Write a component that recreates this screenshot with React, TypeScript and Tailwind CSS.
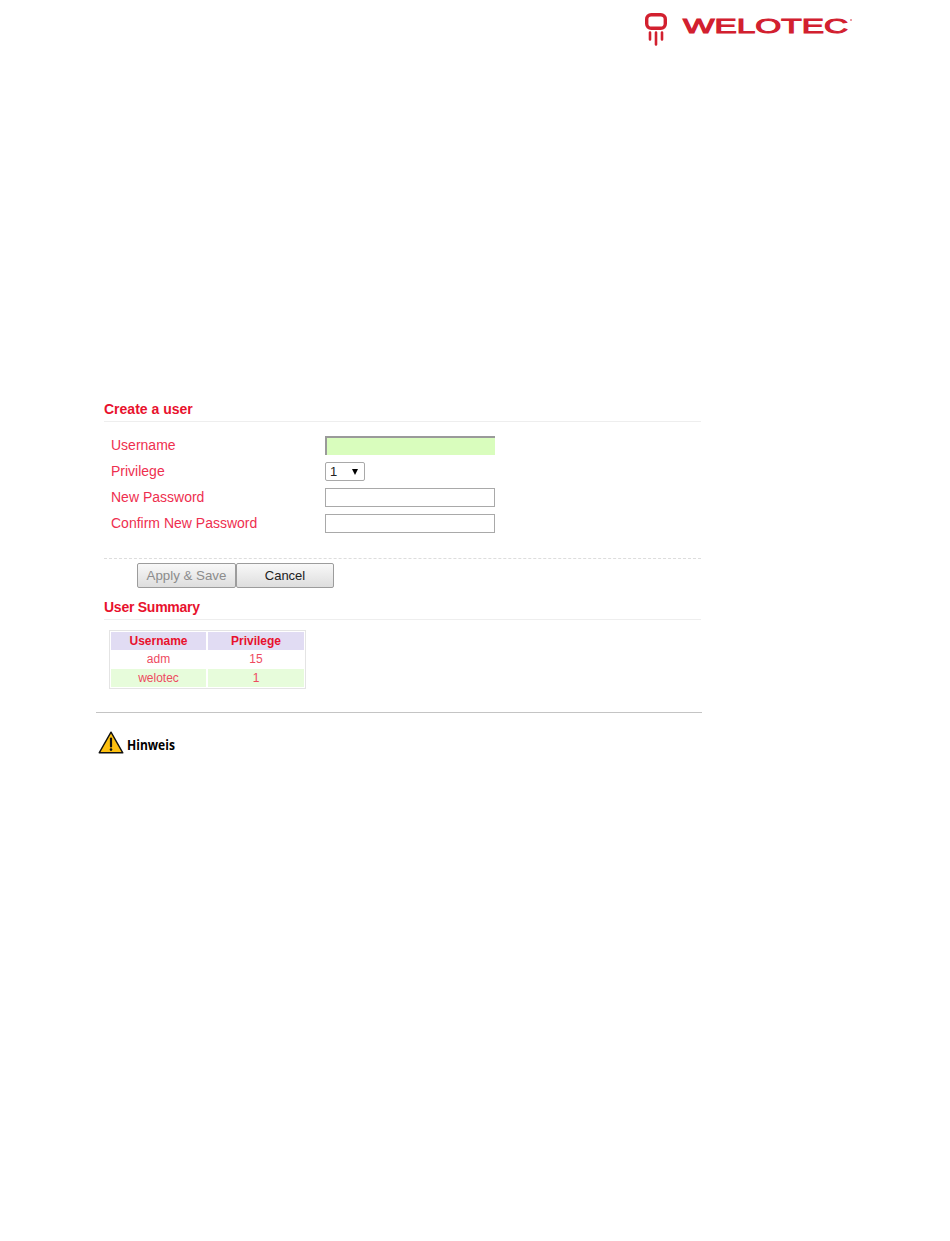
import React from 'react';

const labelClass = 'w-[214px] text-[14px] leading-[19px] text-[#ee2f4f]';
const inputClass = 'block w-[170px] h-[19px] border border-[#a9a9a9] bg-white';

const Logo = () => (
  <svg width="208" height="33" viewBox="0 0 208 33" className="block">
    <rect x="1.7" y="1.7" width="18.6" height="13.6" rx="4.5" fill="none" stroke="#d2202f" strokeWidth="3.4" />
    <path d="M5 19.5v7M11 19.5v12M17 19.5v7" stroke="#d2202f" strokeWidth="2.6" strokeLinecap="round" />
    <text
      x="38"
      y="20"
      textLength="165"
      lengthAdjust="spacingAndGlyphs"
      fill="#d2202f"
      fontFamily="'Liberation Sans', sans-serif"
      fontSize="20"
      stroke="#d2202f"
      strokeWidth="1"
    >
      WELOTEC
    </text>
    <circle cx="206" cy="7" r="0.8" fill="#d2202f" />
  </svg>
);

const WarningIcon = () => (
  <svg width="26" height="23" viewBox="0 0 26 23" className="block">
    <path d="M13 1.2 24.8 21.8H1.2Z" fill="#fdc010" stroke="#111" strokeWidth="1.4" strokeLinejoin="round" />
    <path d="M13 7.5v8" stroke="#111" strokeWidth="2.2" strokeLinecap="round" />
    <circle cx="13" cy="18.6" r="1.3" fill="#111" />
  </svg>
);

const SectionTitle = ({ children, className }: { children: React.ReactNode; className?: string }) => (
  <div className={`border-b border-[#eeeeee] h-[20px] text-[14px] font-bold leading-[15px] text-[#e8112d] ${className ?? ''}`}>{children}</div>
);

export default function App() {
  return (
    <div className="w-[950px] h-[1241px] bg-white font-['Liberation_Sans',Arial,sans-serif]">
      <div className="flex justify-end pt-[13px] pr-[97px]">
        <Logo />
      </div>

      <div className="mt-[356px] ml-[104px] w-[597px]">
        <SectionTitle>Create a user</SectionTitle>

        <div className="pl-[7px] pt-[14px]">
          <div className="flex items-center h-[19px]">
            <div className={labelClass}>Username</div>
            <div className="w-[170px] h-[19px] border-2 border-b-0 border-r-0 border-[#9a9a9a] bg-[#d9fdbd]" />
          </div>
          <div className="flex items-center h-[19px] mt-[7px]">
            <div className={labelClass}>Privilege</div>
            <div className="flex items-center justify-between w-[40px] h-[19px] pl-[4px] pr-[6px] border border-[#a9a9a9] rounded-[2px] bg-white text-[13px] text-[#222222]">
              <span>1</span>
              <span className="w-0 h-0 border-x-[3.5px] border-x-transparent border-t-[6px] border-t-black" />
            </div>
          </div>
          <div className="flex items-center h-[19px] mt-[7px]">
            <div className={labelClass}>New Password</div>
            <div className={inputClass} />
          </div>
          <div className="flex items-center h-[19px] mt-[7px]">
            <div className={labelClass}>Confirm New Password</div>
            <div className={inputClass} />
          </div>
        </div>

        <div className="mt-[25px] border-t border-dashed border-[#dddddd]" />

        <div className="flex pl-[33px] mt-[4px]">
          <button className="w-[99px] h-[25px] border border-[#9c9c9c] rounded-[2px] bg-gradient-to-b from-[#f8f8f8] to-[#dedede] text-[13.3px] text-[#8c8c8c]">Apply &amp; Save</button>
          <button className="w-[98px] h-[25px] border border-[#9c9c9c] rounded-[2px] bg-gradient-to-b from-[#f8f8f8] to-[#dedede] text-[13px] text-[#222222]">Cancel</button>
        </div>

        <div className="mt-[12px]">
          <SectionTitle className="tracking-[-0.25px]">User Summary</SectionTitle>
        </div>

        <div className="ml-[5px] mt-[10px] w-[197px] border border-[#e4e4e4] p-[1px] text-[12px] text-center">
          <div className="flex h-[18px] leading-[18px] bg-[#e1dcf3] font-bold text-[#e8112d]">
            <div className="w-[97px] border-r-2 border-white">Username</div>
            <div className="flex-1">Privilege</div>
          </div>
          <div className="flex h-[19px] leading-[19px] text-[#ee4a5f]">
            <div className="w-[97px] border-r-2 border-white">adm</div>
            <div className="flex-1">15</div>
          </div>
          <div className="flex h-[18px] leading-[18px] bg-[#e7fcdb] text-[#ee4a5f]">
            <div className="w-[97px] border-r-2 border-white">welotec</div>
            <div className="flex-1">1</div>
          </div>
        </div>
      </div>

      <div className="mt-[23px] ml-[96px] w-[606px] border-t border-[#c4c4c4]" />

      <div className="flex items-start gap-[3px] ml-[98px] mt-[18px]">
        <WarningIcon />
        <span className="origin-left scale-x-[0.86] font-['Open_Sans','Liberation_Sans',sans-serif] text-[14px] leading-[20px] font-bold text-black mt-[4px]">Hinweis</span>
      </div>
    </div>
  );
}
